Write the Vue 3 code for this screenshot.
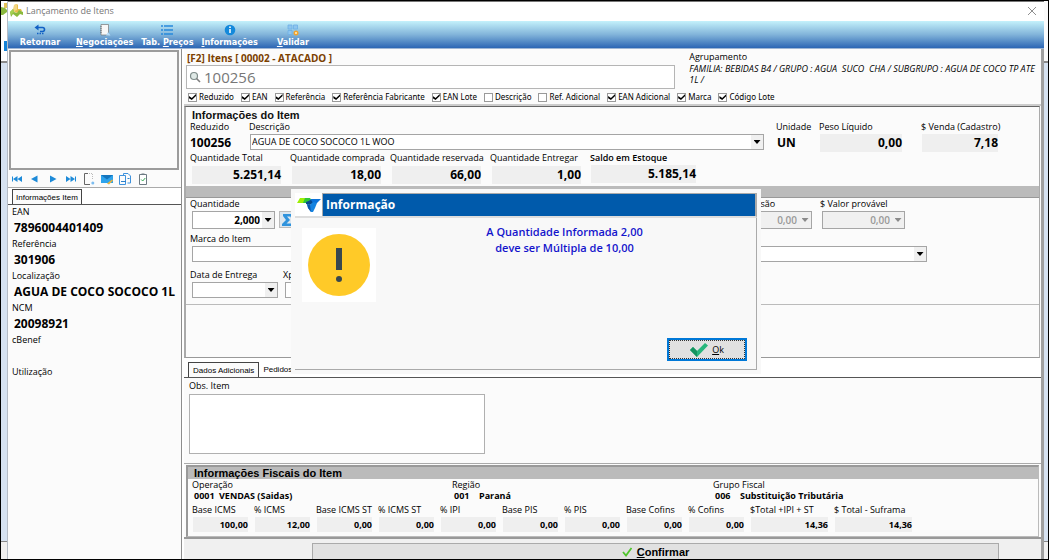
<script setup>
import { ref } from 'vue'

const filters = ref([
  { id: 'reduzido', label: 'Reduzido', on: true },
  { id: 'ean', label: 'EAN', on: true },
  { id: 'ref', label: 'Referência', on: true },
  { id: 'reffab', label: 'Referência Fabricante', on: true },
  { id: 'eanlote', label: 'EAN Lote', on: true },
  { id: 'desc', label: 'Descrição', on: false },
  { id: 'refad', label: 'Ref. Adicional', on: false },
  { id: 'eanad', label: 'EAN Adicional', on: true },
  { id: 'marca', label: 'Marca', on: true },
  { id: 'lote', label: 'Código Lote', on: true },
])

const itemInfo = [
  { label: 'EAN', value: '7896004401409' },
  { label: 'Referência', value: '301906' },
  { label: 'Localização', value: 'AGUA DE COCO SOCOCO 1L' },
  { label: 'NCM', value: '20098921' },
  { label: 'cBenef', value: '' },
  { label: 'Utilização', value: '' },
]

const stock = [
  { label: 'Quantidade Total', value: '5.251,14' },
  { label: 'Quantidade comprada', value: '18,00' },
  { label: 'Quantidade reservada', value: '66,00' },
  { label: 'Quantidade Entregar', value: '1,00' },
  { label: 'Saldo em Estoque', value: '5.185,14', strong: true },
]

const fiscalHead = [
  { label: 'Operação', code: '0001', name: 'VENDAS (Saidas)' },
  { label: 'Região', code: '001', name: 'Paraná' },
  { label: 'Grupo Fiscal', code: '006', name: 'Substituição Tributária' },
]

const taxes = [
  { label: 'Base ICMS', value: '100,00' },
  { label: '% ICMS', value: '12,00' },
  { label: 'Base ICMS ST', value: '0,00' },
  { label: '% ICMS ST', value: '0,00' },
  { label: '% IPI', value: '0,00' },
  { label: 'Base PIS', value: '0,00' },
  { label: '% PIS', value: '0,00' },
  { label: 'Base Cofins', value: '0,00' },
  { label: '% Cofins', value: '0,00' },
  { label: '$Total +IPI + ST', value: '14,36' },
  { label: '$ Total - Suframa', value: '14,36' },
]
</script>

<template>
  <div class="desktop">
    <div class="edge edge-left">
      <svg class="edge-logo" viewBox="0 0 6 14" width="6" height="14" aria-hidden="true">
        <path d="M3 2h3v5H3z" fill="#e3c35a" />
        <path d="M0 6l4 1 2 2v2l-4 3H0z" fill="#8ab83f" />
      </svg>
      <div class="edge-bar"></div>
      <div class="edge-pane"></div>
      <div class="edge-foot"></div>
    </div>

    <main class="window">
      <header class="titlebar">
        <svg viewBox="0 0 14 13" width="14" height="13" aria-hidden="true">
          <path d="M4 1l3-1 1 1v4h3l1 2-5 2-4-2z" fill="#e8bd4c" />
          <path d="M4 1l3-1v6L4 7z" fill="#f3d680" />
          <path d="M0 8l3-3 1 3 3 1 2-3 4 2v3l-3-1-3 3-4-3-2 3z" fill="#8bb93c" />
          <path d="M0 8l3-3 1 3-3 3z" fill="#a5cf52" />
        </svg>
        <h1>Lançamento de Itens</h1>
        <button class="close" type="button" aria-label="Fechar">
          <svg viewBox="0 0 10 10" width="10" height="10"><path d="M1 1l8 8M9 1l-8 8" stroke="#8f8f8f" fill="none" /></svg>
        </button>
      </header>

      <nav class="toolbar">
        <button type="button">
          <svg viewBox="0 0 12 12" width="12" height="12">
            <path d="M3 3.5h5.500q2 0 2 2t-2 2H6" fill="none" stroke="#1160c4" stroke-width="1.600" />
            <path d="M0.500 3.500L4.500 0.500v6z" fill="#1160c4" />
            <path d="M3 9.500h1.500M5.500 9.500H7M8 9.500h1.500" stroke="#1160c4" stroke-width="1.500" />
          </svg>
          <span>Retornar</span>
        </button>
        <button type="button">
          <svg viewBox="0 0 12 12" width="12" height="12">
            <path d="M2 .5h7.500v10.500H2z" fill="#f7f7f7" stroke="#777" stroke-width=".7" />
            <path d="M1.500 2.500h1M1.500 4.500h1M1.500 6.500h1M1.500 8.500h1" stroke="#555" stroke-width=".8" />
            <path d="M7 11.500l2-3.500 2.500 3.500z" fill="#b8dcf8" />
          </svg>
          <span><u>N</u>egociações</span>
        </button>
        <button type="button">
          <svg viewBox="0 0 12 12" width="12" height="12">
            <path d="M0 2h2M0 6h2M0 10h2M3 2H12M3 6H12M3 10H12" stroke="#2789dc" stroke-width="1.300" />
          </svg>
          <span>Tab. <u>P</u>reços</span>
        </button>
        <button type="button">
          <svg viewBox="0 0 12 12" width="12" height="12">
            <circle cx="6" cy="6" r="5.300" fill="#1489db" />
            <path d="M6 5v4" stroke="#fff" stroke-width="1.500" /><circle cx="6" cy="3.200" r=".9" fill="#fff" />
          </svg>
          <span><u>I</u>nformações</span>
        </button>
        <button type="button">
          <svg viewBox="0 0 12 12" width="12" height="12">
            <path d="M1 1h4v4H1zM1 6.500h4v4H1zM6.500 1h4v4h-4z" fill="#8fc5ee" stroke="#6cb0e6" stroke-width=".8" />
            <circle cx="9" cy="9" r="2.500" fill="#f3a32c" /><circle cx="9" cy="9" r="1" fill="#fff0c8" />
          </svg>
          <span><u>V</u>alidar</span>
        </button>
      </nav>

      <div class="body">
        <aside class="side">
          <div class="photo"></div>
          <div class="side-icons">
            <button type="button" aria-label="Primeiro"><svg viewBox="0 0 12 12" width="12" height="12"><path d="M1.500 3.500v5" stroke="#1d8ad8" /><path d="M6.500 3L2 6l4.500 3zM11 3L6.500 6l4.500 3z" fill="#1d8ad8" /></svg></button>
            <button type="button" aria-label="Anterior"><svg viewBox="0 0 12 12" width="12" height="12"><path d="M8.500 2.500L2 6l6.500 3.500z" fill="#1d8ad8" /></svg></button>
            <button type="button" aria-label="Próximo"><svg viewBox="0 0 12 12" width="12" height="12"><path d="M3 2.500L9.500 6 3 9.500z" fill="#1d8ad8" /></svg></button>
            <button type="button" aria-label="Último"><svg viewBox="0 0 12 12" width="12" height="12"><path d="M10.500 3.500v5" stroke="#1d8ad8" /><path d="M5.500 3L10 6 5.500 9zM1 3l4.500 3L1 9z" fill="#1d8ad8" /></svg></button>
            <button type="button" aria-label="Novo"><svg viewBox="0 0 12 12" width="12" height="12"><path d="M5 .5H1.500v11H7" fill="none" stroke="#666" /><path d="M6 .5h3.500v6" fill="none" stroke="#bbb" stroke-dasharray="1 1" /><circle cx="9.800" cy="10" r="1.500" fill="#7dbdf0" /></svg></button>
            <button type="button" aria-label="Enviar"><svg viewBox="0 0 12 12" width="12" height="12"><path d="M0 2h12v8H0z" fill="#2ea3ec" /><path d="M0 2l6 4.500L12 2z" fill="#1475bd" /><path d="M6 10.500l5-4 1 1-4 4z" fill="#e9b33c" /></svg></button>
            <button type="button" aria-label="Copiar"><svg viewBox="0 0 12 12" width="12" height="12"><path d="M4.500.5H9l2.500 2.500v7h-3M4.500.5v2M.5 2.500h6v9h-6z" fill="none" stroke="#3f92dd" /><path d="M2 8.500h5M8.500 5.500h2" stroke="#2d81cc" /></svg></button>
            <button type="button" aria-label="Conferir"><svg viewBox="0 0 12 12" width="12" height="12"><path d="M2.500 1.500h7v10h-7z" fill="#fff" stroke="#6d7a83" /><path d="M4.500.5h3v1.500h-3z" fill="#6d7a83" /><path d="M4.200 6.500l1.500 1.500 2.600-3" fill="none" stroke="#35a853" /></svg></button>
          </div>
          <div class="tabs side-tabs"><button type="button" class="tab active">Informações Item</button></div>
          <dl class="info">
            <template v-for="i in itemInfo" :key="i.label">
              <dt>{{ i.label }}</dt>
              <dd>{{ i.value }}</dd>
            </template>
          </dl>
        </aside>

        <section class="content">
          <div class="search-panel">
            <div class="search-top">
              <div class="search-col">
                <label class="search-title" for="busca">[F2] Itens [ 00002 - ATACADO ]</label>
                <div class="search-box">
                  <svg viewBox="0 0 12 12" width="12" height="12" aria-hidden="true">
                    <circle cx="5" cy="5" r="3.500" fill="#dfe9e6" stroke="#7e8c8a" stroke-width="1.200" />
                    <path d="M7.500 7.500l3.500 3.500" stroke="#7e7e7e" stroke-width="1.600" />
                  </svg>
                  <input id="busca" type="text" value="100256" />
                </div>
              </div>
              <div class="group">
                <div class="group-title">Agrupamento</div>
                <div class="group-path">FAMILIA: BEBIDAS B4 / GRUPO : AGUA&nbsp; SUCO&nbsp; CHA / SUBGRUPO : AGUA DE COCO TP ATE 1L /</div>
              </div>
            </div>
            <div class="filters">
              <label v-for="f in filters" :key="f.id"><input v-model="f.on" type="checkbox" />{{ f.label }}</label>
            </div>
          </div>

          <div class="item-panel">
            <h2>Informações do Item</h2>
            <div class="item-row">
              <div class="reduced">
                <div class="lbl">Reduzido</div>
                <div class="big">100256</div>
              </div>
              <div class="description">
                <label class="lbl" for="descricao">Descrição</label>
                <div class="combo">
                  <select id="descricao"><option>AGUA DE COCO SOCOCO 1L WOO</option></select>
                  <i class="arrow"></i>
                </div>
              </div>
              <div class="unit">
                <div class="lbl">Unidade</div>
                <div class="big">UN</div>
              </div>
              <div class="weight">
                <div class="lbl">Peso Líquido</div>
                <output class="num">0,00</output>
              </div>
              <div class="price">
                <div class="lbl">$ Venda (Cadastro)</div>
                <output class="num">7,18</output>
              </div>
            </div>
            <div class="stock-row">
              <div v-for="s in stock" :key="s.label" :class="{ strong: s.strong }">
                <div class="lbl">{{ s.label }}</div>
                <output class="num">{{ s.value }}</output>
              </div>
            </div>
            <div class="band"></div>
            <div class="form">
              <div class="form-row">
                <div class="qty">
                  <label class="lbl" for="qtd">Quantidade</label>
                  <div class="qty-line">
                    <div class="combo number"><input id="qtd" type="text" value="2,000" /><i class="arrow"></i></div>
                    <button class="sum" type="button" aria-label="Somar">
                      <svg viewBox="0 0 12 12" width="12" height="12"><path d="M1 0h10v4H9L8.500 2.500H5L8 6l-3.500 3.500H9L9.500 8H12v4H0v-2l4-4-3-4z" fill="#2f93dd" /></svg>
                    </button>
                  </div>
                </div>
                <div class="money push">
                  <label class="lbl" for="comissao">$ Comissão</label>
                  <div class="combo number off"><input id="comissao" type="text" value="0,00" disabled /><i class="arrow"></i></div>
                </div>
                <div class="money">
                  <label class="lbl" for="valor">$ Valor provável</label>
                  <div class="combo number off"><input id="valor" type="text" value="0,00" disabled /><i class="arrow"></i></div>
                </div>
              </div>
              <div class="form-row brand">
                <div class="grow">
                  <label class="lbl" for="marca-item">Marca do Item</label>
                  <div class="combo"><select id="marca-item"><option></option></select><i class="arrow"></i></div>
                </div>
              </div>
              <div class="form-row">
                <div class="date">
                  <label class="lbl" for="entrega">Data de Entrega</label>
                  <div class="combo"><input id="entrega" type="text" /><i class="arrow"></i></div>
                </div>
                <div class="date">
                  <label class="lbl" for="xped">Xped</label>
                  <div class="combo"><input id="xped" type="text" /></div>
                </div>
              </div>
            </div>
          </div>

          <div class="tabs main-tabs">
            <button type="button" class="tab active">Dados Adicionais</button>
            <button type="button" class="tab">Pedidos de Venda</button>
          </div>
          <div class="notes">
            <label class="lbl" for="obs">Obs. Item</label>
            <textarea id="obs"></textarea>
          </div>

          <div class="fiscal">
            <h2>Informações Fiscais do Item</h2>
            <div class="fiscal-head">
              <div v-for="h in fiscalHead" :key="h.label">
                <div class="lbl">{{ h.label }}</div>
                <div class="pair"><b>{{ h.code }}</b><b>{{ h.name }}</b></div>
              </div>
            </div>
            <div class="taxes">
              <div v-for="t in taxes" :key="t.label">
                <div class="lbl">{{ t.label }}</div>
                <output>{{ t.value }}</output>
              </div>
            </div>
          </div>

          <footer class="footer">
            <button type="button" class="confirm">
              <svg viewBox="0 0 10 10" width="10" height="10"><path d="M1 5l3 3.500L9.500 1" fill="none" stroke="#4fc52c" stroke-width="1.800" /></svg>
              <span><u>C</u>onfirmar</span>
            </button>
          </footer>
        </section>
      </div>

      <div class="overlay">
        <div class="dialog" role="alertdialog" aria-labelledby="dlg-title" aria-describedby="dlg-text">
          <div class="dialog-head">
            <svg viewBox="0 0 24 16" width="24" height="16" aria-hidden="true">
              <path d="M3 1h8L9 6H0z" fill="#9dee06" />
              <path d="M8 1h5l2 3-6 2H6z" fill="#2fc53a" />
              <path d="M14 2h10l-4 4h-5l-3-2z" fill="#0b72d9" />
              <path d="M9 5l5-2 2 3-3 2-4-1z" fill="#07498f" />
              <path d="M10 7l3 1 3-3 4 1-2 5-2 4h-2l-3-4z" fill="#1583e0" />
              <path d="M13 8l1 7-3-4-1-4z" fill="#0b55ad" />
            </svg>
            <h2 id="dlg-title">Informação</h2>
          </div>
          <div class="dialog-body">
            <div class="warn">
              <svg viewBox="0 0 74 74" width="74" height="74" aria-hidden="true">
                <circle cx="37" cy="37" r="31" fill="#ffca28" />
                <path d="M34 20h6v22h-6z" fill="#37474f" /><circle cx="37" cy="51" r="3" fill="#37474f" />
              </svg>
            </div>
            <p id="dlg-text">A Quantidade Informada 2,00<br />deve ser Múltipla de 10,00</p>
          </div>
          <div class="dialog-foot">
            <button type="button" class="ok">
              <svg viewBox="0 0 18 14" width="18" height="14"><path d="M0 7l3-3 4 4 8-8 3 2.500L7 14z" fill="#26b67c" /><path d="M0 7l3-3 4 4v6z" fill="#15945f" /></svg>
              <span><u>O</u>k</span>
            </button>
          </div>
        </div>
      </div>
    </main>

    <div class="edge edge-right">
      <div class="edge-top"></div>
      <div class="edge-pane"></div>
      <div class="edge-foot"></div>
    </div>
  </div>
</template>

<style>
body {
  background: #000;
}
</style>

<style scoped>
* {
  box-sizing: border-box;
}
.desktop {
  display: flex;
  height: 100vh;
  min-height: 540px;
  border: 1px solid #000;
  overflow: hidden;
  background: #fff;
  color: #000;
  font: 9px/12px "Open Sans", "Noto Sans", sans-serif;
}
button,
input,
select,
textarea {
  margin: 0;
  padding: 0;
  border: 0;
  border-radius: 0;
  background: none;
  color: inherit;
  font: inherit;
}
h1,
h2,
p,
dl,
dd {
  margin: 0;
}
svg {
  display: block;
  flex: none;
}

.edge {
  display: flex;
  flex-direction: column;
  flex: none;
}
.edge-left {
  width: 7px;
  border-right: 1px solid #b5bcc6;
}
.edge-right {
  width: 4px;
}
.edge-bar {
  height: 10px;
  margin: 26px 0 10px 3px;
  background: #1583d8;
}
.edge-top {
  height: 60px;
  background: #fbfbfb;
}
.edge-pane {
  flex: 1;
  border-top: 2px solid #8a8a8a;
  background: #d6e2f1;
}
.edge-foot {
  height: 18px;
  border-top: 1px solid #888;
  background: #f0f0f0;
}

.window {
  position: relative;
  display: flex;
  flex-direction: column;
  flex: 1;
  min-width: 0;
  border-top: 1px solid #777;
  background: #fff;
}
.titlebar {
  display: flex;
  align-items: center;
  gap: 2px;
  height: 19px;
  padding: 0 7px 2px 2px;
}
.titlebar h1 {
  flex: 1;
  color: #777;
  font-size: 9px;
  font-weight: 400;
}
.toolbar {
  display: flex;
  gap: 8px;
  height: 28px;
  padding: 3px 10px 0;
  border-bottom: 1px solid #9fb6d4;
  background: linear-gradient(#c4f1fb, #82b4da 50%, #2c66b4);
}
.toolbar button {
  display: flex;
  flex-direction: column;
  align-items: center;
  height: 24px;
  min-width: 44px;
  color: #fff;
  font: bold 9px/12px "DejaVu Sans Condensed", "Noto Sans", sans-serif;
}
.toolbar button:first-child {
  margin-right: 6px;
}
.toolbar button:last-child {
  margin-left: 5px;
}
.body {
  display: flex;
  flex: 1;
  min-height: 0;
}

.side {
  display: flex;
  flex-direction: column;
  flex: none;
  width: 174px;
  border-right: 1px solid #8d8d8d;
  background: #fbfbfb;
}
.photo {
  height: 120px;
  margin: 1px 2px 0 1px;
  border: 2px solid #9c9c9c;
}
.side-icons {
  display: flex;
  align-items: center;
  gap: 6px;
  height: 18px;
  padding-left: 3px;
  border-bottom: 1px solid #aaa;
}
.tabs {
  display: flex;
  border-bottom: 1px solid #555;
  background: #fff;
  font: 8px/13px "Liberation Sans", sans-serif;
}
.tab {
  height: 15px;
  padding: 0 4px;
}
.tab.active {
  border: 1px solid #444;
  border-bottom: 0;
  background: #fbfbfb;
}
.side-tabs {
  padding: 1px 0 0 4px;
}
.side-tabs .tab {
  padding: 0 3px;
}
.info {
  padding-left: 4px;
}
.info dt {
  line-height: 13px;
}
.info dd {
  height: 19px;
  margin: 0 0 0 2px;
  font-size: 12px;
  font-weight: 700;
  line-height: 19px;
  white-space: nowrap;
}

.content {
  display: flex;
  flex-direction: column;
  flex: 1;
  min-width: 0;
  margin-left: 2px;
  border-right: 3px solid #a0a0a0;
  background: #fbfbfb;
}
.search-panel {
  padding: 2px 3px 0 2px;
  height: 57px;
  border-bottom: 2px solid #ccc;
}
.search-top {
  display: flex;
  gap: 14px;
}
.search-col {
  flex: 491;
}
.group {
  flex: 350;
}
.search-title {
  display: block;
  padding-left: 1px;
  color: #7b3f00;
  font-size: 10px;
  font-weight: 700;
  line-height: 14px;
}
.search-box {
  display: flex;
  align-items: center;
  height: 24px;
  border: 1px solid #b5b5b5;
  background: #fff;
}
.search-box svg {
  margin: 0 3px 0 2px;
}
.search-box input {
  flex: 1;
  min-width: 0;
  height: 21px;
  color: #777;
  font-size: 15px;
  outline: 0;
}
.group-title {
  line-height: 12px;
}
.group-path {
  font-size: 9px;
  font-style: italic;
  line-height: 11px;
}
.filters {
  display: flex;
  gap: 7px;
  padding: 2px 0 0 2px;
  font: 8px/12px "Noto Sans", sans-serif;
  white-space: nowrap;
}
.filters label {
  display: flex;
  align-items: center;
  gap: 2px;
}
.filters input {
  display: grid;
  place-items: center;
  appearance: none;
  width: 9px;
  height: 9px;
  border: 1px solid #999;
  background: #fff;
}
.filters input:checked::after {
  width: 7px;
  height: 6px;
  background: #000;
  clip-path: polygon(0 35%, 40% 65%, 100% 0, 100% 35%, 40% 100%, 0 70%);
  content: "";
}

.lbl {
  display: block;
  line-height: 12px;
  white-space: nowrap;
}
.item-panel {
  flex: 1;
  min-height: 200px;
  margin-right: 1px;
  border: 2px solid #aaa;
  border-top: 1px solid #666;
  border-right: 1px solid #aaa;
  border-bottom: 1px solid #999;
}
h2 {
  font: bold 11px/13px "Liberation Sans", sans-serif;
}
.item-panel h2 {
  padding: 2px 0 0 6px;
  line-height: 12px;
  color: #111;
}
.big {
  font-size: 12px;
  font-weight: 700;
  line-height: 20px;
}
.num {
  display: block;
  height: 18px;
  background: #efefef;
  font-size: 12px;
  font-weight: 700;
  line-height: 18px;
  text-align: right;
}
.item-row {
  display: flex;
  padding: 0 41px 0 4px;
  height: 31px;
}
.item-row .combo,
.item-row .num {
  margin: 1px 0 0 1px;
}
.reduced {
  width: 59px;
}
.description {
  flex: 1;
}
.unit {
  width: 43px;
  margin-left: 12px;
}
.unit .big {
  padding-left: 1px;
}
.weight {
  width: 83px;
}
.price {
  width: 77px;
  margin-left: 19px;
}
.combo {
  display: flex;
  align-items: center;
  height: 16px;
  border: 1px solid #a5a5a5;
  background: #fff;
}
.combo select,
.combo input {
  flex: 1;
  min-width: 0;
  height: 14px;
  padding-left: 1px;
  appearance: none;
  outline: 0;
}
.arrow {
  display: grid;
  place-items: center;
  width: 12px;
  height: 100%;
  background: #f0f0f0;
}
.arrow::after {
  width: 7px;
  height: 4px;
  background: #000;
  clip-path: polygon(0 0, 100% 0, 50% 100%);
  content: "";
}
.combo.number {
  width: 83px;
  height: 18px;
}
.combo.number input {
  font-size: 10px;
  font-weight: 700;
  text-align: right;
  padding-right: 2px;
}
.combo.off,
.combo.off .arrow {
  background: #f0f0f0;
}
.combo.off input {
  color: #999;
  font-weight: 600;
}
.off .arrow::after {
  background: #8a8a8a;
}
.stock-row {
  display: flex;
  padding: 0 0 2px 4px;
}
.stock-row > div {
  width: 100px;
}
.stock-row .num {
  width: 89px;
  margin: 2px 0 0 2px;
}
.stock-row .strong .num {
  width: 105px;
  margin: 1px 0 0 1px;
}
.strong .lbl {
  font-weight: 600;
}
.band {
  height: 12px;
  border-bottom: 1px solid #999;
  background: #bbb;
}
.form {
  padding: 0 0 6px 4px;
  border-bottom: 1px solid #bbb;
}
.form-row {
  display: flex;
  gap: 8px;
  padding-right: 134px;
}
.form-row.brand {
  padding: 4px 112px 7px 0;
}
.form-row .combo {
  margin: 1px 0 0 2px;
}
.qty-line {
  display: flex;
  gap: 4px;
  align-items: center;
}
.sum {
  display: grid;
  place-items: center;
  width: 18px;
  height: 17px;
  border: 1px solid #bbb;
  background: #dbe6ef;
}
.money {
  width: 85px;
}
.push {
  margin-left: auto;
}
.grow {
  flex: 1;
}
.date {
  width: 88px;
}
.date + .date {
  margin-left: -3px;
}

.main-tabs {
  padding: 4px 0 0 4px;
}
.main-tabs .tab {
  padding: 0 4px;
}
.notes {
  height: 86px;
  padding: 2px 5px;
  border-bottom: 1px solid #aaa;
}
.notes textarea {
  display: block;
  width: 35%;
  height: 60px;
  margin-top: 2px;
  border: 1px solid #b0b0b0;
  background: #fff;
  resize: none;
}
.fiscal {
  margin: 1px 2px 0;
  border: 2px solid #999;
  border-right: 1px solid #bbb;
  border-bottom: 1px solid #bbb;
}
.fiscal h2 {
  padding-left: 6px;
  background: #bbb;
  line-height: 12px;
}
.fiscal-head {
  display: grid;
  grid-template-columns: 260fr 261fr 325fr;
  padding-left: 4px;
}
.pair {
  display: grid;
  grid-template-columns: 25px 1fr;
  padding-left: 2px;
  line-height: 11px;
}
.fiscal .lbl {
  line-height: 11px;
}
.taxes {
  display: flex;
  gap: 6px;
  padding: 3px 0 4px 4px;
}
.taxes > div {
  width: 56px;
}
.taxes > div:nth-child(n + 10) {
  width: 78px;
}
.taxes output {
  display: block;
  height: 15px;
  margin: 2px 0 0 1px;
  background: #efefef;
  font-weight: 700;
  line-height: 15px;
  text-align: right;
}
.footer {
  height: 22px;
  padding: 4px 42px 0 128px;
  border-top: 2px solid #999;
  background: #f0f0f0;
}
.confirm {
  display: flex;
  align-items: center;
  justify-content: center;
  gap: 5px;
  width: 100%;
  height: 17px;
  border: 1px solid #aaa;
  border-bottom: 0;
  background: #e1e1e1;
  font: bold 11px/15px "Liberation Sans", sans-serif;
}

.overlay {
  position: absolute;
  inset: 2px 0 0;
  display: grid;
  place-items: center;
}
.dialog {
  display: flex;
  flex-direction: column;
  width: 470px;
  height: 185px;
  padding: 4px;
  background: #f8f8f8;
}
.dialog-head {
  display: flex;
  align-items: center;
  height: 25px;
  border-right: 1px solid #aaa;
  border-bottom: 2px solid #ddd;
  background: #fff;
}
.dialog-head svg {
  margin: 0 1px 0 2px;
}
.dialog-head h2 {
  flex: 1;
  height: 23px;
  padding-left: 3px;
  border: 1px solid #aaa;
  border-bottom: 0;
  background: #005aab;
  color: #fff;
  font: bold 12px/22px "Open Sans", "Noto Sans", sans-serif;
}
.dialog-body {
  display: flex;
  flex: 1;
  padding: 6px 0 0 7px;
  border-right: 1px solid #aaa;
}
.warn {
  width: 74px;
  height: 74px;
  margin-top: 4px;
  background: #fff;
}
.dialog-body p {
  flex: 1;
  padding-right: 3px;
  color: #1414cc;
  font-size: 11px;
  font-weight: 600;
  line-height: 16px;
  text-align: center;
}
.dialog-foot {
  display: flex;
  justify-content: flex-end;
  padding: 0 9px 8px;
  border-right: 1px solid #aaa;
  border-bottom: 1px solid #aaa;
}
.ok {
  display: flex;
  align-items: center;
  justify-content: center;
  gap: 4px;
  width: 80px;
  height: 23px;
  border: 2px solid #0078d7;
  outline: 1px dotted #333;
  outline-offset: -3px;
  background: #e1e1e1;
}
</style>
